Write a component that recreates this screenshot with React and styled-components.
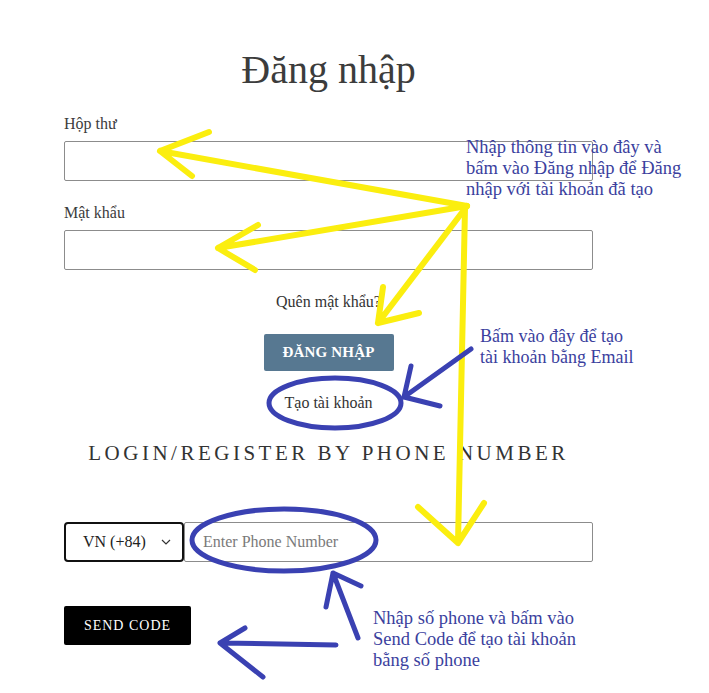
import React from "react";
import styled, { createGlobalStyle } from "styled-components";

const GlobalStyle = createGlobalStyle`
  html, body {
    margin: 0;
    padding: 0;
    background: #fff;
  }
  body {
    font-family: "Liberation Serif", "Times New Roman", serif;
    color: #3a3a3a;
  }
`;

const Page = styled.div`
  position: relative;
  width: 709px;
  height: 693px;
  overflow: hidden;
`;

const Form = styled.div`
  width: 529px;
  margin-left: 64px;
  padding-top: 47px;
  display: flex;
  flex-direction: column;
`;

const Title = styled.h1`
  margin: 0;
  text-align: center;
  font-weight: normal;
  font-size: 40px;
  line-height: 46px;
  color: #3c3c3c;
`;

const Label = styled.label`
  display: block;
  font-size: 16px;
  line-height: 20px;
  margin-top: ${(p) => p.$top}px;
  margin-bottom: 7px;
  color: #3c3c3c;
`;

const TextInput = styled.input`
  box-sizing: border-box;
  height: 40px;
  width: 100%;
  border: 1px solid #8c8c8c;
  border-radius: 2px;
  padding: 0 16px;
  font-family: inherit;
  font-size: 16px;
  background: #fff;
  outline: none;
  &::placeholder {
    color: #7a7a7a;
  }
`;

const Link = styled.div`
  text-align: center;
  font-size: 16px;
  line-height: 20px;
  margin-top: ${(p) => p.$top}px;
  color: #333;
`;

const LoginButton = styled.button`
  align-self: center;
  margin-top: 22px;
  width: 130px;
  height: 37px;
  border: none;
  border-radius: 2px;
  background: #577891;
  color: #fff;
  font-family: inherit;
  font-weight: bold;
  font-size: 15px;
  letter-spacing: 0.2px;
`;

const PhoneHeading = styled.h2`
  margin: 27px 0 0;
  text-align: center;
  font-weight: normal;
  font-size: 21px;
  line-height: 26px;
  letter-spacing: 3.5px;
  color: #333;
`;

const PhoneRow = styled.div`
  display: flex;
  margin-top: 56px;
  height: 40px;
`;

const CountrySelect = styled.div`
  box-sizing: border-box;
  width: 120px;
  height: 40px;
  border: 2px solid #111;
  border-radius: 4px;
  display: flex;
  align-items: center;
  justify-content: space-between;
  padding: 0 11px 0 17px;
  font-size: 16px;
  color: #222;
  flex-shrink: 0;
`;

const PhoneInput = styled(TextInput)`
  flex: 1;
  padding: 0 18px;
`;

const SendButton = styled.button`
  align-self: flex-start;
  margin-top: 44px;
  width: 127px;
  height: 39px;
  border: none;
  border-radius: 2px;
  background: #000;
  color: #fff;
  font-family: inherit;
  font-size: 14px;
  letter-spacing: 1px;
`;

const Overlay = styled.svg`
  position: absolute;
  left: 0;
  top: 0;
  pointer-events: none;
`;

const Note = styled.div`
  position: absolute;
  left: ${(p) => p.$x}px;
  top: ${(p) => p.$y}px;
  font-size: ${(p) => p.$size || 18.5}px;
  line-height: 21px;
  color: #3b3f9e;
  white-space: nowrap;
  pointer-events: none;
`;

const yellow = "#fbee0f";
const blue = "#3a41b2";

export default function App() {
  return (
    <>
      <GlobalStyle />
      <Page>
        <Form>
          <Title>Đăng nhập</Title>
          <Label $top={21}>Hộp thư</Label>
          <TextInput type="email" />
          <Label $top={22}>Mật khẩu</Label>
          <TextInput type="password" />
          <Link $top={22}>Quên mật khẩu?</Link>
          <LoginButton>ĐĂNG NHẬP</LoginButton>
          <Link $top={22}>Tạo tài khoản</Link>
          <PhoneHeading>LOGIN/REGISTER BY PHONE NUMBER</PhoneHeading>
          <PhoneRow>
            <CountrySelect>
              <span>VN (+84)</span>
              <svg width="10" height="6" viewBox="0 0 10 6">
                <polyline points="1,1 5,5 9,1" fill="none" stroke="#333" strokeWidth="1.2" />
              </svg>
            </CountrySelect>
            <PhoneInput placeholder="Enter Phone Number" />
          </PhoneRow>
          <SendButton>SEND CODE</SendButton>
        </Form>

        <Overlay width="709" height="693" viewBox="0 0 709 693">
          <g fill="none" stroke={yellow} strokeWidth="6" strokeLinecap="round" strokeLinejoin="round">
            <path d="M467 206 L160 151 M160 151 L209 132 M160 151 L192 176" />
            <path d="M467 206 L218 248 M218 248 L258 225 M218 248 L255 270" />
            <path d="M467 206 L378 323 M378 323 L383 287 M378 323 L419 313" />
            <path d="M465 208 L458 543 M458 543 L418 507 M458 543 L484 503" />
          </g>
          <g fill="none" stroke={blue} strokeWidth="5" strokeLinecap="round" strokeLinejoin="round">
            <ellipse cx="335" cy="403" rx="66" ry="25" />
            <path d="M471 349 L404 397 M404 397 L411 366 M404 397 L440 406" />
            <ellipse cx="284" cy="540" rx="92" ry="31" />
            <path d="M358 638 L333 573 M333 573 L326 607 M333 573 L361 586" />
            <path d="M336 645 L220 643 M220 643 L245 628 M220 643 L263 677" />
          </g>
        </Overlay>

        <Note $x={466} $y={137}>
          Nhập thông tin vào đây và
          <br />
          bấm vào Đăng nhập để Đăng
          <br />
          nhập với tài khoản đã tạo
        </Note>
        <Note $x={480} $y={326} $size={18}>
          Bấm vào đây để tạo
          <br />
          tài khoản bằng Email
        </Note>
        <Note $x={373} $y={608}>
          Nhập số phone và bấm vào
          <br />
          Send Code để tạo tài khoản
          <br />
          bằng số phone
        </Note>
      </Page>
    </>
  );
}
